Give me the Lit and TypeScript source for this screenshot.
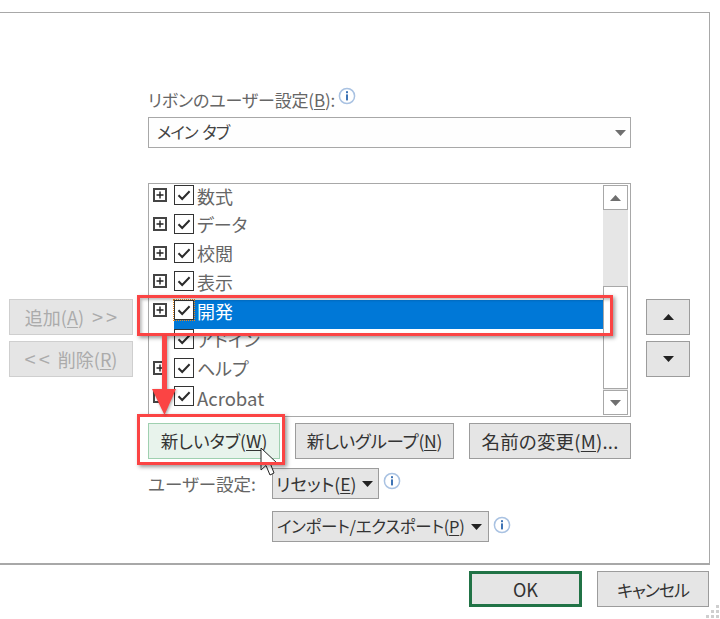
import { LitElement, html, css, svg } from "lit";
import { customElement } from "lit/decorators.js";

const rows = [
  { t: "数式", exp: true },
  { t: "データ", exp: true },
  { t: "校閲", exp: true },
  { t: "表示", exp: true },
  { t: "開発", exp: true, sel: true },
  { t: "アドイン", exp: false },
  { t: "ヘルプ", exp: true },
  { t: "Acrobat", exp: true },
];

const tri = (up: boolean, cls: string) => html`<svg class=${cls} viewBox="0 0 11 6" width="11" height="6"><path d=${up ? "M5.5 0 L11 6 L0 6Z" : "M0 0 L11 0 L5.5 6Z"}></path></svg>`;
const info = html`<svg class="info" viewBox="0 0 18 18" width="18" height="18"><circle cx="9" cy="9" r="7.6" fill="#fff" stroke="#a9c2e2" stroke-width="1.5"></circle><rect x="8" y="7.4" width="2" height="6" fill="#3f74b5"></rect><rect x="8" y="4.2" width="2" height="2" fill="#3f74b5"></rect></svg>`;
const check = svg`<path d="M4.5 10.2 L8.2 14 L15.6 6.2" fill="none" stroke="#2b2b2b" stroke-width="2"></path>`;

@customElement("app-root")
export class AppRoot extends LitElement {
  static styles = css`
    :host {
      display: block; position: relative; width: 720px; height: 619px; overflow: hidden;
      background: #fff; color: #444;
      font-family: "Noto Sans CJK JP", "Noto Sans", sans-serif; font-size: 17px;
      font-feature-settings: "palt"; line-height: 1;
    }
    .frame {
      box-sizing: border-box; margin-top: 12px; width: 710px; height: 553px;
      border: solid #a8a8a8; border-width: 1px 1px 2px 0;
      display: flex; padding-left: 9px; gap: 15px;
    }
    .side { display: flex; flex-direction: column; gap: 6px; padding-top: 286px; }
    .side.l { width: 124px; }
    .side.r { width: 44px; }
    .btn {
      box-sizing: border-box; display: flex; align-items: center; justify-content: center;
      background: #e5e5e5; border: 1px solid #9c9c9c; color: #333; white-space: nowrap;
    }
    .side .btn { height: 36px; gap: 8px; }
    .side.l .btn { border-color: #cfcfcf; color: #ababab; font-size: 18px; }
    .wide { font-size: 20px; letter-spacing: 3px; margin-right: -3px; }
    .tr-d { fill: #222; flex: none; }
    .tr-g { fill: #6f6f6f; flex: none; }
    .main { width: 483px; display: flex; flex-direction: column; padding-top: 75px; }
    .label { height: 29px; display: flex; align-items: flex-start; gap: 1px; color: #666; font-size: 17px; letter-spacing: -0.15px; }
    .label span { padding-top: 3px; }
    .label .info { margin-top: -1px; margin-left: 2px; }
    .combo {
      box-sizing: border-box; height: 31px; border: 1px solid #a8a8a8; display: flex; align-items: center;
      justify-content: space-between; padding: 0 3px 0 8px; color: #444; background: #fefefe;
      font-size: 16.5px; letter-spacing: -1px; word-spacing: 2px;
    }
    .combo .tri { margin-right: 1px; }
    .list {
      box-sizing: border-box; margin-top: 35px; height: 234px; border: 1px solid #a8a8a8;
      display: flex; padding: 1px; overflow: hidden;
    }
    .rows { flex: 1; min-width: 0; display: flex; flex-direction: column; }
    .row { height: 28.75px; display: flex; flex: none; color: #666; font-size: 18px; }
    .gut { width: 24px; flex: none; padding: 3px 0 0 3px; box-sizing: border-box; }
    .exp { display: block; }
    .item { flex: 1; display: flex; gap: 3px; }
    .item.sel { background: #0078d7; color: #fff; }
    .cb { position: relative; flex: none; width: 20px; height: 20px; box-sizing: border-box; border: 1.5px solid #333; background: #fff; }
    .item.sel .cb { outline: 1px dotted #e8871e; outline-offset: 0; }
    .cb svg { position: absolute; left: -1px; top: -1px; display: block; }
    .tx { padding-top: 1.5px; }
    .tx.lat { padding-top: 3px; font-size: 18.5px; }
    .sb { width: 25px; flex: none; display: flex; flex-direction: column; background: #e6e6e6; margin-right: 1px; }
    .sb .b { box-sizing: border-box; height: 25px; background: #fff; border: 1px solid #a8a8a8; display: flex; align-items: center; justify-content: center; flex: none; }
    .sb .tk { height: 76px; flex: none; }
    .sb .th { box-sizing: border-box; height: 103px; flex: none; background: #fff; border: 1px solid #a8a8a8; margin-bottom: 1px; }
    .acts { display: flex; gap: 15px; margin-top: 6px; }
    .acts .btn { height: 36px; }
    .new { width: 132px; background: #e8f3ec; border-color: #9fd0b0; color: #333; font-size: 17.5px; }
    .grp { width: 159px; letter-spacing: -0.25px; font-size: 17.5px; }
    .ren { width: 162px; font-size: 18.5px; letter-spacing: 0.2px; }
    .urow { display: flex; align-items: flex-start; margin-top: 9px; }
    .ulab { width: 124px; color: #666; padding-top: 7px; font-size: 17.5px; }
    .dd { height: 31px; gap: 6px; justify-content: flex-start; padding: 0 6px 0 3px; }
    .dd.a { width: 107px; font-size: 17.5px; }
    .dd.b { width: 217px; font-size: 16.5px; letter-spacing: -0.3px; padding-left: 4px; }
    .urow .info { margin: 4px 0 0 4px; }
    .urow.two { margin-top: 12px; padding-left: 124px; }
    .urow.two .info { margin-top: 5px; }
    .dd .lbl { flex: 1; }
    .foot { display: flex; justify-content: flex-end; gap: 15px; padding: 6px 11px 0 0; }
    .foot .btn { height: 36px; }
    .ok { width: 113px; border: 3px solid #217346; font-size: 18px; }
    .cancel { width: 112px; letter-spacing: -1px; }
    u { text-underline-offset: 2px; }
    .red {
      position: absolute; box-sizing: border-box; border: 3px solid #fb4444;
      box-shadow: 2px 2px 4px rgba(0,0,0,.4), inset 2px 2px 3px rgba(0,0,0,.25);
    }
    .r1 { left: 137px; top: 295px; width: 476px; height: 41px; }
    .r2 { left: 137px; top: 414px; width: 148px; height: 51px; box-shadow: 2px 2px 4px rgba(0,0,0,.4); }
    .ov { position: absolute; left: 0; top: 0; }
    .arrow { filter: drop-shadow(1px 1px 1.5px rgba(0,0,0,.35)); }
    .grip { position: absolute; right: 0; bottom: 0; display: grid; grid-template-columns: repeat(3, 3px); gap: 2px; padding: 0 1px 1px 0; }
    .grip i { width: 3px; height: 3px; background: #cfcfcf; }
    .grip i.e { background: none; }
  `;

  render() {
    return html`
      <div class="frame">
        <div class="side l">
          <div class="btn"><span>追加(<u>A</u>)</span><span class="wide">&gt;&gt;</span></div>
          <div class="btn"><span class="wide">&lt;&lt;</span><span>削除(<u>R</u>)</span></div>
        </div>
        <div class="main">
          <div class="label"><span>リボンのユーザー設定(<u>B</u>):</span>${info}</div>
          <div class="combo"><span>メイン タブ</span>${tri(false, "tri tr-g")}</div>
          <div class="list">
            <div class="rows">
              ${rows.map(
                (r) => html`<div class="row">
                  <div class="gut">
                    ${r.exp
                      ? html`<svg class="exp" viewBox="0 0 14 14" width="14" height="14"><rect x="1" y="1" width="12" height="12" fill="#fff" stroke="#444" stroke-width="2"></rect><path d="M3.5 7H10.5M7 3.5V10.5" stroke="#222" stroke-width="1.4"></path></svg>`
                      : ""}
                  </div>
                  <div class="item ${r.sel ? "sel" : ""}">
                    <div class="cb"><svg viewBox="0 0 20 20" width="20" height="20">${check}</svg></div>
                    <span class="tx ${r.t === "Acrobat" ? "lat" : ""}">${r.t}</span>
                  </div>
                </div>`
              )}
            </div>
            <div class="sb">
              <div class="b">${tri(true, "tr-g")}</div>
              <div class="tk"></div>
              <div class="th"></div>
              <div class="b">${tri(false, "tr-g")}</div>
            </div>
          </div>
          <div class="acts">
            <div class="btn new">新しいタブ(<u>W</u>)</div>
            <div class="btn grp">新しいグループ(<u>N</u>)</div>
            <div class="btn ren">名前の変更(<u>M</u>)...</div>
          </div>
          <div class="urow">
            <div class="ulab">ユーザー設定:</div>
            <div class="btn dd a"><span class="lbl">リセット(<u>E</u>)</span>${tri(false, "tr-d")}</div>
            ${info}
          </div>
          <div class="urow two">
            <div class="btn dd b"><span class="lbl">インポート/エクスポート(<u>P</u>)</span>${tri(false, "tr-d")}</div>
            ${info}
          </div>
        </div>
        <div class="side r">
          <div class="btn">${tri(true, "tr-d")}</div>
          <div class="btn">${tri(false, "tr-d")}</div>
        </div>
      </div>
      <div class="foot">
        <div class="btn ok">OK</div>
        <div class="btn cancel">キャンセル</div>
      </div>
      <svg class="ov" width="720" height="619" viewBox="0 0 720 619">
        <path d="M261 448 V470 L266 465.5 L270 475 L274 473 L270.5 464 L278 464Z" fill="#fff" stroke="#222" stroke-width="1"></path>
      </svg>
      <div class="red r1"></div>
      <div class="red r2"></div>
      <svg class="ov arrow" width="720" height="619" viewBox="0 0 720 619">
        <path d="M162 336 H167 V389 H176 L164.5 415 L152 389 H162Z" fill="#fb4444"></path>
      </svg>
      <div class="grip">
        <i class="e"></i><i class="e"></i><i></i>
        <i class="e"></i><i></i><i></i>
        <i></i><i></i><i></i>
      </div>
    `;
  }
}
